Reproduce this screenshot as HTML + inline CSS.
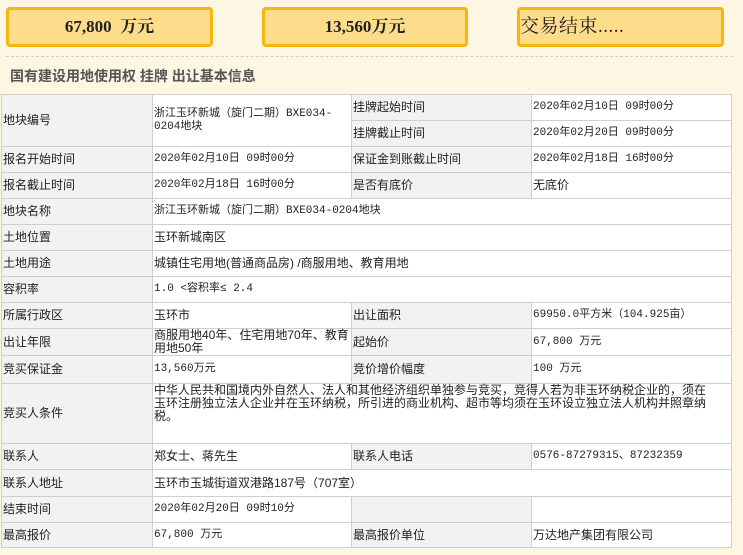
<!DOCTYPE html>
<html><head><meta charset="utf-8"><style>
body{margin:0;width:743px;height:555px;background:#fdf6e3;font-family:"Liberation Serif","Noto Serif CJK SC","Noto Sans CJK SC",serif;overflow:hidden;position:relative}
.box{position:absolute;top:7px;height:34px;background:#fddc8b;border:3px solid #f6b60d;border-radius:4px;font-size:17px;font-weight:bold;color:#222;line-height:34px}
.dash{position:absolute;left:6px;right:10px;top:56px;border-top:1px dashed #d8cfb8}
.title{position:absolute;left:10px;top:66px;font-size:14px;font-weight:bold;color:#555;font-family:"Liberation Sans","Noto Sans CJK SC",sans-serif}
table{position:absolute;left:1px;top:94px;width:730px;border-collapse:collapse;font-family:"Liberation Sans","Noto Sans CJK SC",sans-serif;font-size:12px;color:#222;table-layout:fixed}
td{border:1px solid #cfcfcf;padding:0 1px;background:#fff;line-height:13px;vertical-align:middle}
td.l{background:#f2f2f2}
.s{font-size:11px;font-family:"Liberation Mono","Noto Sans CJK SC",monospace}
</style></head><body>
<div class="box" style="left:6px;width:201px;text-align:center">67,800&nbsp; 万元</div>
<div class="box" style="left:262px;width:200px;text-align:center">13,560万元</div>
<div class="box" style="left:517px;width:201px;text-align:left;font-size:19px;font-weight:normal;letter-spacing:0.5px">交易结束.....</div>
<div class="dash"></div>
<div class="title">国有建设用地使用权 挂牌 出让基本信息</div>
<table>
<colgroup><col style="width:151px"><col style="width:199px"><col style="width:180px"><col style="width:200px"></colgroup>
<tr style="height:26px"><td class="l" rowspan="2">地块编号</td><td rowspan="2" class="s">浙江玉环新城（旋门二期）BXE034-0204地块</td><td class="l">挂牌起始时间</td><td class="s">2020年02月10日 09时00分</td></tr>
<tr style="height:26px"><td class="l">挂牌截止时间</td><td class="s">2020年02月20日 09时00分</td></tr>
<tr style="height:26px"><td class="l">报名开始时间</td><td class="s">2020年02月10日 09时00分</td><td class="l">保证金到账截止时间</td><td class="s">2020年02月18日 16时00分</td></tr>
<tr style="height:26px"><td class="l">报名截止时间</td><td class="s">2020年02月18日 16时00分</td><td class="l">是否有底价</td><td>无底价</td></tr>
<tr style="height:26px"><td class="l">地块名称</td><td colspan="3" class="s">浙江玉环新城（旋门二期）BXE034-0204地块</td></tr>
<tr style="height:26px"><td class="l">土地位置</td><td colspan="3">玉环新城南区</td></tr>
<tr style="height:26px"><td class="l">土地用途</td><td colspan="3">城镇住宅用地(普通商品房) /商服用地、教育用地</td></tr>
<tr style="height:26px"><td class="l">容积率</td><td colspan="3" class="s">1.0 &lt;容积率≤ 2.4</td></tr>
<tr style="height:26px"><td class="l">所属行政区</td><td>玉环市</td><td class="l">出让面积</td><td class="s">69950.0平方米（104.925亩）</td></tr>
<tr style="height:27px"><td class="l">出让年限</td><td>商服用地40年、住宅用地70年、教育用地50年</td><td class="l">起始价</td><td class="s">67,800 万元</td></tr>
<tr style="height:28px"><td class="l">竞买保证金</td><td class="s">13,560万元</td><td class="l">竞价增价幅度</td><td class="s">100 万元</td></tr>
<tr style="height:60px"><td class="l">竞买人条件</td><td colspan="3" style="vertical-align:top;padding-right:24px">中华人民共和国境内外自然人、法人和其他经济组织单独参与竞买，竞得人若为非玉环纳税企业的，须在玉环注册独立法人企业并在玉环纳税，所引进的商业机构、超市等均须在玉环设立独立法人机构并照章纳税。</td></tr>
<tr style="height:26px"><td class="l">联系人</td><td>郑女士、蒋先生</td><td class="l">联系人电话</td><td class="s">0576-87279315、87232359</td></tr>
<tr style="height:27px"><td class="l">联系人地址</td><td colspan="3">玉环市玉城街道双港路187号（707室）</td></tr>
<tr style="height:26px"><td class="l">结束时间</td><td class="s">2020年02月20日 09时10分</td><td class="l"></td><td></td></tr>
<tr style="height:25px"><td class="l">最高报价</td><td class="s">67,800 万元</td><td class="l">最高报价单位</td><td>万达地产集团有限公司</td></tr>
</table>
</body></html>
